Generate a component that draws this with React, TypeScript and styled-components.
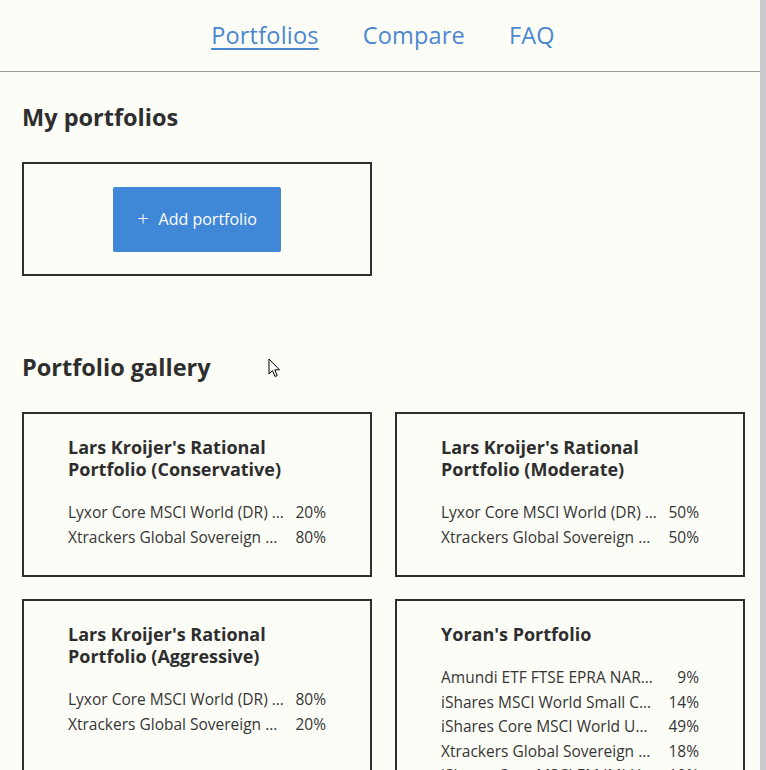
import React from "react";
import styled, { createGlobalStyle } from "styled-components";

const GlobalStyle = createGlobalStyle`
  html, body { margin: 0; padding: 0; }
  body {
    background: #fdfdf8;
    font-family: "Open Sans", "Noto Sans", sans-serif;
    color: #2f2f2f;
    overflow: hidden;
  }
`;

const Page = styled.div`
  position: relative;
  height: 770px;
  overflow: hidden;
`;

const ScrollStrip = styled.div`
  position: fixed;
  top: 0;
  right: 0;
  width: 6px;
  height: 100%;
  background: #c9c9cf;
`;

const Header = styled.nav`
  height: 72px;
  border-bottom: 1px solid #9a9a9a;
  display: flex;
  align-items: center;
  justify-content: center;
  gap: 44px;
  padding-bottom: 1px;
  box-sizing: border-box;
`;

const NavLink = styled.a<{ $active?: boolean }>`
  font-size: 23.5px;
  color: #4a87cf;
  text-decoration: ${(p) => (p.$active ? "underline" : "none")};
  text-underline-offset: 4px;
  text-decoration-thickness: 2px;
  cursor: pointer;
  letter-spacing: 0.2px;
`;

const Content = styled.main`
  padding: 0 22px;
`;

const SectionTitle = styled.h2<{ $top: number }>`
  margin: ${(p) => p.$top}px 0 0;
  font-size: 23.5px;
  line-height: 30px;
  font-weight: 700;
  color: #2e2e2e;
`;

const AddBox = styled.div`
  margin-top: 30px;
  width: 350px;
  height: 114px;
  box-sizing: border-box;
  border: 2px solid #2f2f2f;
  display: flex;
  align-items: center;
  justify-content: center;
`;

const AddButton = styled.button`
  width: 168px;
  height: 65px;
  border: none;
  border-radius: 2px;
  background: #4187d8;
  color: #ffffff;
  font-family: inherit;
  font-size: 16px;
  display: flex;
  align-items: center;
  justify-content: center;
  gap: 10px;
  cursor: pointer;
`;

const Plus = styled.span`
  font-size: 20px;
  line-height: 1;
  font-weight: 300;
`;

const Grid = styled.div`
  margin-top: 30px;
  display: grid;
  grid-template-columns: 350px 350px;
  gap: 22px 23px;
`;

const Card = styled.div`
  box-sizing: border-box;
  border: 2px solid #2f2f2f;
  padding: 22px 44px 25px;
  min-height: 165px;
`;

const CardTitle = styled.h3`
  margin: 0;
  font-size: 18px;
  line-height: 22px;
  font-weight: 700;
  color: #2e2e2e;
`;

const Holdings = styled.div`
  margin-top: 20px;
  display: grid;
  grid-template-columns: minmax(0, 1fr) 34px;
  column-gap: 8px;
  font-size: 15.5px;
  line-height: 24.5px;
  color: #353535;
`;

const Name = styled.span`
  white-space: nowrap;
  overflow: hidden;
  text-overflow: ellipsis;
`;

const Pct = styled.span`
  text-align: right;
`;

const Cursor = styled.svg`
  position: absolute;
  left: 268px;
  top: 358px;
  width: 13px;
  height: 20px;
`;

type Portfolio = { title: string; items: [string, number][] };

const gallery: Portfolio[] = [
  {
    title: "Lars Kroijer's Rational Portfolio (Conservative)",
    items: [
      ["Lyxor Core MSCI World (DR) UCITS ETF", 20],
      ["Xtrackers Global Sovereign UCITS ETF", 80],
    ],
  },
  {
    title: "Lars Kroijer's Rational Portfolio (Moderate)",
    items: [
      ["Lyxor Core MSCI World (DR) UCITS ETF", 50],
      ["Xtrackers Global Sovereign UCITS ETF", 50],
    ],
  },
  {
    title: "Lars Kroijer's Rational Portfolio (Aggressive)",
    items: [
      ["Lyxor Core MSCI World (DR) UCITS ETF", 80],
      ["Xtrackers Global Sovereign UCITS ETF", 20],
    ],
  },
  {
    title: "Yoran's Portfolio",
    items: [
      ["Amundi ETF FTSE EPRA NAREIT Global UCITS ETF", 9],
      ["iShares MSCI World Small Cap UCITS ETF", 14],
      ["iShares Core MSCI World UCITS ETF", 49],
      ["Xtrackers Global Sovereign UCITS ETF", 18],
      ["iShares Core MSCI EM IMI UCITS ETF", 10],
    ],
  },
];

export default function App() {
  return (
    <Page>
      <GlobalStyle />
      <Header>
        <NavLink $active>Portfolios</NavLink>
        <NavLink>Compare</NavLink>
        <NavLink>FAQ</NavLink>
      </Header>
      <Content>
        <SectionTitle $top={30}>My portfolios</SectionTitle>
        <AddBox>
          <AddButton>
            <Plus>+</Plus>
            Add portfolio
          </AddButton>
        </AddBox>
        <SectionTitle $top={76}>Portfolio gallery</SectionTitle>
        <Grid>
          {gallery.map((p) => (
            <Card key={p.title}>
              <CardTitle>{p.title}</CardTitle>
              <Holdings>
                {p.items.map(([n, v]) => (
                  <React.Fragment key={n}>
                    <Name>{n}</Name>
                    <Pct>{v}%</Pct>
                  </React.Fragment>
                ))}
              </Holdings>
            </Card>
          ))}
        </Grid>
      </Content>
      <Cursor viewBox="0 0 13 20">
        <path d="M1 1 L1 16 L4.5 12.5 L7 18.5 L9.2 17.6 L6.8 11.8 L11.5 11.8 Z" fill="#fff" stroke="#000" strokeWidth="1" strokeLinejoin="round" />
      </Cursor>
      <ScrollStrip />
    </Page>
  );
}
